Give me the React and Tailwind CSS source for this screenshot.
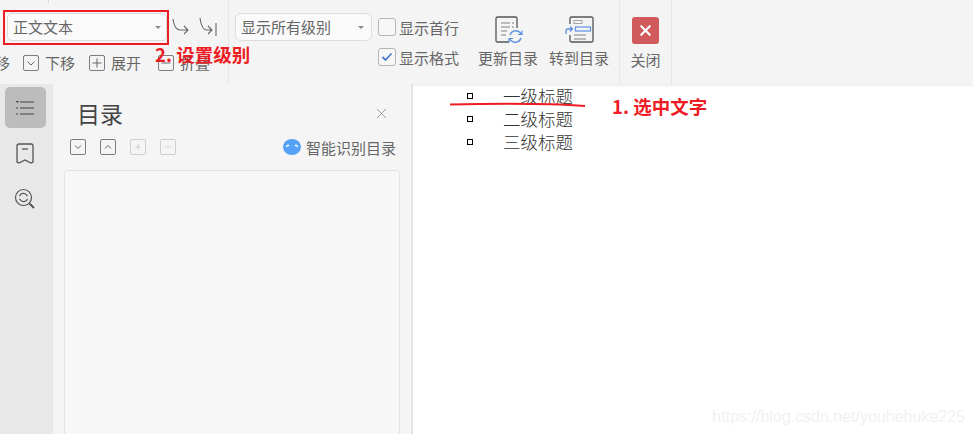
import { X } from "lucide-react";

const font = { fontFamily: '"Noto Sans CJK SC", "Liberation Sans", sans-serif' };

function Caret() {
  return <span className="ml-auto h-0 w-0 border-x-[3px] border-t-[3px] border-x-transparent border-t-[#8a8a8a]" />;
}

function SmallBox({ children, className = "border-[#7d7d7d] text-[#666]" }) {
  return (
    <span className={`flex h-[16px] w-[16px] items-center justify-center rounded-[2px] border ${className}`}>
      <svg width="12" height="12" viewBox="0 0 12 12" fill="none" stroke="currentColor" strokeWidth="1">
        {children}
      </svg>
    </span>
  );
}

function ToolCheck({ checked, label }) {
  return (
    <div className="flex h-[24px] items-center gap-[3px]">
      <span className="flex h-[18px] w-[18px] items-center justify-center rounded-[3px] border border-[#b5b5b5] bg-[#f7f7f7]">
        {checked && (
          <svg width="12" height="12" viewBox="0 0 12 12" fill="none" stroke="#4a7ccf" strokeWidth="1.8">
            <path d="M1.5 6l3 3 6-6.5" />
          </svg>
        )}
      </span>
      <span className="text-[15px] leading-none text-[#666]">{label}</span>
    </div>
  );
}

function UpdateIcon() {
  return (
    <svg width="30" height="30" viewBox="0 0 30 30" fill="none">
      <path d="M15 27H3.5A1.5 1.5 0 0 1 2 25.500V3.500A1.500 1.500 0 0 1 3.500 2h18A1.500 1.500 0 0 1 23 3.500V13" stroke="#555" strokeWidth="1.300" />
      <path d="M7 8h9M7 12h9M7 16h6M7 20h5M18 8h2M18 12h2" stroke="#a6a6a6" strokeWidth="1.500" />
      <path d="M16 20a6 6 0 0 1 10-2.500l1.500 1.500M27 23a6 6 0 0 1-10 2.500L15.500 24" stroke="#5b8fe0" strokeWidth="1.400" />
      <path d="M28 15.500V19.500H24M15 27.500V23.500H19" stroke="#5b8fe0" strokeWidth="1.200" />
    </svg>
  );
}

function GotoIcon() {
  return (
    <svg width="30" height="30" viewBox="0 0 30 30" fill="none">
      <path d="M5 9V3.500A1.500 1.500 0 0 1 6.500 2h20A1.500 1.500 0 0 1 28 3.500v22a1.500 1.500 0 0 1-1.500 1.500h-20A1.500 1.500 0 0 1 5 25.500V20" stroke="#555" strokeWidth="1.300" />
      <rect x="9" y="5.500" width="8" height="3" stroke="#a6a6a6" />
      <rect x="10.500" y="12" width="15" height="4" stroke="#5b8fe0" strokeWidth="1.200" />
      <path d="M9 20h12M9 24h12" stroke="#a6a6a6" strokeWidth="1.500" />
      <path d="M1 19v-3a2 2 0 0 1 2-2h4M5 11.500L7.500 14 5 16.500" stroke="#5b8fe0" strokeWidth="1.300" />
    </svg>
  );
}

export default function App() {
  return (
    <div className="relative flex h-[434px] w-[973px] flex-col overflow-hidden bg-white" style={font}>
      {/* ribbon */}
      <div className="flex h-[84px] shrink-0 bg-[#f4f4f4] shadow-[0_1px_3px_rgba(0,0,0,0.12)]">
        <div className="w-[229px] shrink-0 border-r border-[#e6e6e6] pt-[13px]">
          <div className="flex items-center pl-[7px]">
            <div className="flex h-[28px] w-[160px] items-center rounded-[5px] border border-[#dcdcdc] bg-[#fafafa] px-[5px] text-[15px] text-[#666]">
              正文文本
              <Caret />
            </div>
            <svg className="ml-[5px]" width="48" height="20" viewBox="0 0 48 20" fill="none" stroke="#666" strokeWidth="1.100">
              <path d="M1 2c1 7 3 11 7 11h8M12 9l4 4-4 4" />
              <path d="M28 1c1 8 3 12 7 12h5M36 9l4 4-4 4M44 6v13" />
            </svg>
          </div>
          <div className="mt-[9px] flex h-[26px] items-center text-[15px] text-[#666]">
            <span className="w-[10px] overflow-hidden whitespace-nowrap" dir="rtl">移</span>
            <span className="ml-[13px] flex h-[16px] w-[16px] items-center justify-center rounded-[2px] border border-[#7d7d7d]">
              <svg width="12" height="12" viewBox="0 0 12 12" fill="none" stroke="#666"><path d="M2.500 4.500L6 8l3.500-3.500" /></svg>
            </span>
            <span className="ml-[6px]">下移</span>
            <span className="ml-[14px] flex h-[16px] w-[16px] items-center justify-center rounded-[2px] border border-[#7d7d7d]">
              <svg width="12" height="12" viewBox="0 0 12 12" fill="none" stroke="#666"><path d="M6 1.500v9M1.500 6h9" /></svg>
            </span>
            <span className="ml-[6px]">展开</span>
            <span className="ml-[17px] flex h-[16px] w-[16px] items-center justify-center rounded-[2px] border border-[#7d7d7d]">
              <svg width="12" height="12" viewBox="0 0 12 12" fill="none" stroke="#666"><path d="M1.500 6h9" /></svg>
            </span>
            <span className="ml-[6px]">折叠</span>
          </div>
        </div>

        <div className="flex w-[391px] shrink-0 border-r border-[#e6e6e6] pl-[6px] pt-[13px]">
          <div className="flex h-[28px] w-[137px] items-center rounded-[6px] border border-[#dcdcdc] bg-[#fafafa] pl-[5px] pr-[7px] text-[15px] text-[#666]">
            显示所有级别
            <Caret />
          </div>
          <div className="ml-[6px] flex flex-col gap-[6px] pt-[2px]">
            <ToolCheck label="显示首行" />
            <ToolCheck checked label="显示格式" />
          </div>
          <div className="-mt-[1px] ml-[19px] flex w-[62px] flex-col items-center">
            <div className="h-[32px] pt-[3px]"><UpdateIcon /></div>
            <span className="mt-[4px] -translate-x-[1px] text-[15px] leading-[20px] text-[#666]">更新目录</span>
          </div>
          <div className="-mt-[1px] ml-[9px] flex w-[62px] flex-col items-center">
            <div className="h-[32px] pt-[3px]"><GotoIcon /></div>
            <span className="mt-[4px] -translate-x-[1px] text-[15px] leading-[20px] text-[#666]">转到目录</span>
          </div>
        </div>

        <div className="flex w-[52px] shrink-0 flex-col items-center border-r border-[#e6e6e6] pt-[17px]">
          <span className="flex h-[27px] w-[27px] items-center justify-center rounded-[3px] bg-[#d05a5c]">
            <X size={17} color="#fff" strokeWidth={3} />
          </span>
          <span className="mt-[6px] text-[15px] leading-[20px] text-[#666]">关闭</span>
        </div>
      </div>

      <div className="flex min-h-0 flex-1">
        {/* side tabs */}
        <div className="flex w-[53px] shrink-0 flex-col items-center bg-[#e8e8e8] pt-[3px]">
          <div className="-ml-[3px] flex h-[41px] w-[41px] items-center justify-center rounded-[5px] bg-[#bcbcbc]">
            <svg width="20" height="16" viewBox="0 0 20 16" fill="none" stroke="#444" strokeWidth="1.200">
              <path d="M5 2h14M5 8h14M5 14h14M1 8h2M1 14h2" />
              <path d="M0.500 1h3.500L2.200 3z" fill="#444" stroke="none" />
            </svg>
          </div>
          <svg className="-ml-[3px] mt-[15px]" width="20" height="22" viewBox="0 0 20 22" fill="none" stroke="#555" strokeWidth="1.300">
            <path d="M2 3a2 2 0 0 1 2-2h12a2 2 0 0 1 2 2v16l-2 1-6-3-6 3-2-1z" />
            <path d="M7 6h6" />
          </svg>
          <svg className="-ml-[3px] mt-[23px]" width="22" height="22" viewBox="0 0 22 22" fill="none" stroke="#555" strokeWidth="1.200">
            <circle cx="9.500" cy="9.500" r="8" />
            <path d="M15.500 15.500l4.500 4.500" strokeWidth="2" />
            <path d="M5.500 8a4 4 0 0 1 7-1l1 1M13.500 11a4 4 0 0 1-7 1l-1-1" />
          </svg>
        </div>

        {/* toc panel */}
        <div className="flex w-[360px] shrink-0 flex-col border-r-2 border-[#e4e4e4] bg-[#f5f5f5] px-[11px]">
          <div className="flex h-[50px] items-center pt-[8px]">
            <span className="ml-[13px] text-[23px] leading-none text-[#444]">目录</span>
            <X className="ml-auto mr-[10px]" size={17} color="#777" strokeWidth={1} />
          </div>
          <div className="flex h-[26px] items-center">
            <div className="ml-[6px] flex gap-[14px]">
              <SmallBox><path d="M3 4.500L6 7.500l3-3" /></SmallBox>
              <SmallBox><path d="M3 7.500L6 4.500l3 3" /></SmallBox>
              <SmallBox className="border-[#cfcfcf] text-[#cfcfcf]"><path d="M6 3v6M3 6h6" /></SmallBox>
              <SmallBox className="border-[#cfcfcf] text-[#cfcfcf]"><path d="M3 6h6" /></SmallBox>
            </div>
            <svg className="ml-auto" width="18" height="16" viewBox="0 0 18 16">
              <ellipse cx="9" cy="8" rx="9" ry="8" fill="#55a1f5" />
              <path d="M3 8l2-2 1 1M12 7l1-1 2 2" fill="none" stroke="#fff" strokeWidth="1.200" />
            </svg>
            <span className="ml-[5px] mr-[4px] text-[15px] leading-none text-[#666]">智能识别目录</span>
          </div>
          <div className="mt-[10px] flex-1 rounded-t-[4px] border border-b-0 border-[#e4e4e4] bg-[#f7f7f7]" />
        </div>

        {/* document */}
        <div className="relative flex-1 pl-[54px] text-[17.5px] leading-[23px] text-[#333]" style={{ fontFamily: '"Noto Sans CJK SC", serif' }}>
          {["一级标题", "二级标题", "三级标题"].map((t) => (
            <div key={t} className="flex items-center">
              <span className="h-[6px] w-[6px] border border-black" />
              <span className="ml-[30px] font-light">{t}</span>
            </div>
          ))}
          <span className="absolute bottom-[6px] right-[8px] text-[16px] text-[#f1f1f1]" style={{ fontFamily: '"Liberation Sans", sans-serif' }}>
            https://blog.csdn.net/youhebuke225
          </span>
        </div>
      </div>

      {/* red annotations */}
      <span className="absolute left-[48px] top-0 h-[3px] w-px bg-[#d8d8d8]" />
      <div className="absolute left-[3px] top-[10px] h-[35px] w-[166px] border-2 border-[#ed1c24]" />
      <span className="absolute left-[155px] top-[43px] text-[18.500px] font-bold leading-[22px] text-[#ed1c24]">2. 设置级别</span>
      <span className="absolute left-[612px] top-[95px] text-[18.500px] font-bold leading-[22px] text-[#ed1c24]">1. 选中文字</span>
      <svg className="absolute left-[450px] top-[102px]" width="136" height="6" viewBox="0 0 136 6" fill="none">
        <path d="M0 2.500C50 1.500 100 1.500 135 4" stroke="#ed1c24" strokeWidth="2" />
      </svg>
    </div>
  );
}
